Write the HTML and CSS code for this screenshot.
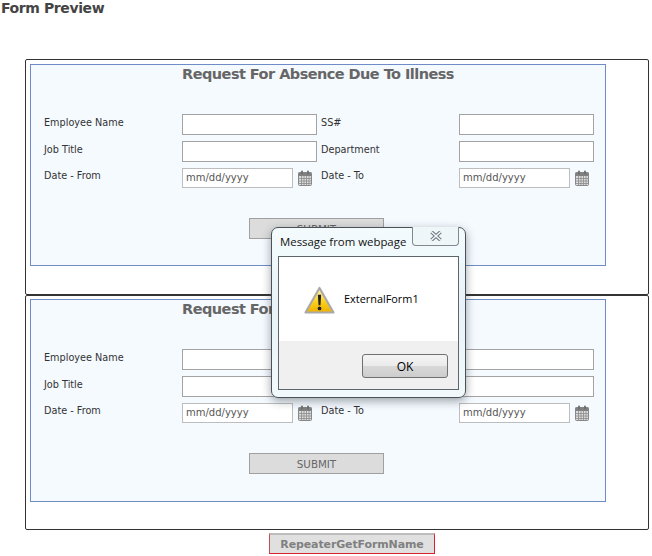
FILE: index.html
```html
<!DOCTYPE html>
<html lang="en">
<head>
<meta charset="utf-8">
<title>Form Preview</title>
<link rel="stylesheet" href="styles.css">
</head>
<body>
<h1 class="page-title">Form Preview</h1>
<svg class="defs" width="0" height="0" aria-hidden="true">
  <symbol id="cal" viewBox="0 0 14 16">
    <rect x="0.5" y="2.5" width="13" height="13" rx="1" fill="#dcdcdc" stroke="#888"/>
    <rect x="0.5" y="2.5" width="13" height="3.5" fill="#808080"/>
    <rect x="3" y="0.5" width="2" height="4" rx="1" fill="#707070"/>
    <rect x="9" y="0.5" width="2" height="4" rx="1" fill="#707070"/>
    <path d="M1 8.5H13M1 11H13M1 13.5H13M3.5 6V15M6 6V15M8.5 6V15M11 6V15" stroke="#8a8a8a" stroke-width="0.8" fill="none"/>
  </symbol>
</svg>

<section class="frame">
  <form class="sheet">
    <h2 class="sheet-title">Request For Absence Due To Illness</h2>
    <div class="fields">
      <label class="lbl">Employee Name</label><input class="box" type="text">
      <label class="lbl lbl-b">SS#</label><input class="box" type="text">
      <label class="lbl">Job Title</label><input class="box" type="text">
      <label class="lbl lbl-b">Department</label><input class="box" type="text">
      <label class="lbl">Date - From</label>
      <div class="date"><input class="date-box" type="text" placeholder="mm/dd/yyyy"><svg class="cal"><use href="#cal"/></svg></div>
      <label class="lbl lbl-b">Date - To</label>
      <div class="date"><input class="date-box" type="text" placeholder="mm/dd/yyyy"><svg class="cal"><use href="#cal"/></svg></div>
    </div>
    <div class="actions"><button class="submit" type="button">SUBMIT</button></div>
  </form>
</section>

<section class="frame frame-second">
  <form class="sheet">
    <h2 class="sheet-title">Request For Absence Due To Illness</h2>
    <div class="fields">
      <label class="lbl">Employee Name</label><input class="box" type="text">
      <label class="lbl lbl-b">SS#</label><input class="box" type="text">
      <label class="lbl">Job Title</label><input class="box" type="text">
      <label class="lbl lbl-b">Department</label><input class="box" type="text">
      <label class="lbl">Date - From</label>
      <div class="date"><input class="date-box" type="text" placeholder="mm/dd/yyyy"><svg class="cal"><use href="#cal"/></svg></div>
      <label class="lbl lbl-b">Date - To</label>
      <div class="date"><input class="date-box" type="text" placeholder="mm/dd/yyyy"><svg class="cal"><use href="#cal"/></svg></div>
    </div>
    <div class="actions"><button class="submit" type="button">SUBMIT</button></div>
  </form>
</section>

<div class="foot"><button class="repeater" type="button">RepeaterGetFormName</button></div>

<div class="dialog" role="alertdialog">
  <div class="dialog-bar">
    <span class="dialog-title">Message from webpage</span>
    <span class="dialog-close"><svg width="12" height="10" viewBox="0 0 12 10"><path d="M1.5 1L10.5 9M10.5 1L1.5 9" stroke="#6d7680" stroke-width="3.6"/><path d="M1.5 1L10.5 9M10.5 1L1.5 9" stroke="#f4f8fa" stroke-width="1.6"/></svg></span>
  </div>
  <div class="dialog-body">
    <div class="dialog-msg">
      <svg class="warn" width="31" height="28" viewBox="0 0 32 29">
        <defs><linearGradient id="amber" x1="0" y1="0" x2="0" y2="1"><stop offset="0" stop-color="#fff6c4"/><stop offset="0.55" stop-color="#fdd21e"/><stop offset="1" stop-color="#f0ae00"/></linearGradient></defs>
        <path d="M16 2L30.5 27.5H1.5Z" fill="url(#amber)" stroke="#a9a9a9" stroke-width="2.2" stroke-linejoin="round"/>
        <path d="M14.3 9H17.7L17 20H15Z" fill="#222"/>
        <circle cx="16" cy="23.2" r="1.9" fill="#222"/>
      </svg>
      <span class="dialog-text">ExternalForm1</span>
    </div>
    <div class="dialog-foot"><button class="ok" type="button">OK</button></div>
  </div>
</div>
</body>
</html>
```

FILE: styles.css
```css
* { box-sizing: border-box; }
html, body { margin: 0; padding: 0; background: #fff; }
body {
  width: 652px;
  height: 556px;
  overflow: hidden;
  position: relative;
  font-family: "DejaVu Sans", Verdana, sans-serif;
}
.defs { display: block; height: 0; }
.page-title {
  margin: 0 0 0 1px;
  height: 59px;
  font: bold 14px/16px "DejaVu Sans", Verdana, sans-serif;
  color: #444;
  letter-spacing: -0.4px;
}
.frame {
  margin-left: 25px;
  width: 624px;
  height: 236px;
  padding: 4px;
  border: 1px solid #333;
  border-radius: 2px;
  background: #fff;
}
.frame-second { height: 235px; padding-top: 3px; }
.sheet {
  width: 576px;
  height: 202px;
  border: 1px solid #6f8cc6;
  background: #f5faff;
  display: flex;
  flex-direction: column;
}
.frame-second .sheet { height: 203px; }
.sheet-title {
  margin: 0;
  height: 49px;
  font: bold 14.5px/18px "DejaVu Sans", Verdana, sans-serif;
  letter-spacing: -0.55px;
  color: #666;
  text-align: center;
}
.fields {
  margin-left: 13px;
  display: grid;
  grid-template-columns: 138px 139px 138px 135px;
  grid-template-rows: 21px 21px 21px;
  row-gap: 5.5px;
}
.lbl {
  font-size: 9.7px;
  line-height: 17px;
  color: #333;
}
.box {
  width: 135px;
  height: 21px;
  margin: 0;
  border: 1px solid #a3a3a3;
  background: #fff;
  padding: 0 3px;
  outline: 0;
}
.date { display: flex; align-items: flex-start; gap: 5px; padding-top: 0.5px; }
.date-box {
  width: 111px;
  height: 20px;
  margin: 0;
  border: 1px solid #bdbdbd;
  background: #fff;
  padding: 0 3px;
  font: 10px "DejaVu Sans", Verdana, sans-serif;
  outline: 0;
}
.date-box::placeholder { color: #555; opacity: 1; }
.cal { width: 14px; height: 16px; margin-top: 2px; flex: none; }
.actions { margin-top: 30px; padding-left: 218px; }
.submit {
  display: block;
  width: 135px;
  height: 21px;
  padding: 0;
  border: 1px solid #a0a0a0;
  border-radius: 0;
  background: #dcdcdc;
  color: #666;
  font: 10.3px "DejaVu Sans", Verdana, sans-serif;
}
.foot { margin-top: 3px; padding-left: 269px; }
.repeater {
  display: block;
  width: 166px;
  height: 21px;
  padding: 0;
  border: 1px solid #d8222f;
  border-top: 2px solid #bdbdbd;
  border-left-color: #c94a50;
  border-radius: 0;
  background: #e0e0e0;
  color: #808080;
  font: bold 11px "DejaVu Sans", Verdana, sans-serif;
  letter-spacing: -0.12px;
}
.dialog {
  position: absolute;
  left: 271px;
  top: 227px;
  width: 195px;
  height: 171px;
  padding: 0 6px 7px 6px;
  display: flex;
  flex-direction: column;
  border: 1px solid #4a5157;
  border-radius: 7px;
  background: linear-gradient(180deg, #f4fbfd 0%, #e7f3f8 45%, #f2f9fb 100%);
  box-shadow: 0 3px 10px rgba(40, 50, 60, 0.45);
  font-family: "Open Sans", sans-serif;
}
.dialog-bar { display: flex; justify-content: space-between; height: 28px; flex: none; }
.dialog-title {
  padding: 5px 0 0 2px;
  font-size: 11.4px;
  line-height: 18px;
  color: #111;
  white-space: nowrap;
}
.dialog-close {
  width: 47px;
  height: 19px;
  margin-top: -1px;
  display: flex;
  align-items: center;
  justify-content: center;
  border: 1px solid #7f8a90;
  border-top: 0;
  border-radius: 0 0 4px 4px;
  background: #eef6f8;
}
.dialog-body {
  flex: 1;
  display: flex;
  flex-direction: column;
  border: 1px solid #5d666b;
  background: #fff;
}
.dialog-msg { height: 84px; padding: 29px 0 0 25px; display: flex; align-items: flex-start; gap: 9px; }
.warn { flex: none; }
.dialog-text { margin-top: 5px; font-size: 10.9px; line-height: 16px; color: #000; }
.dialog-foot { flex: 1; background: #f0f0f0; padding: 13px 10px 0 0; display: flex; justify-content: flex-end; }
.ok {
  width: 86px;
  height: 24px;
  padding: 0;
  border: 1px solid #707070;
  border-radius: 3px;
  background: linear-gradient(180deg, #f4f4f4 0%, #ebebeb 48%, #d8d8d8 52%, #cdcdcd 100%);
  font: 12px "Open Sans", sans-serif;
  color: #000;
}
```
